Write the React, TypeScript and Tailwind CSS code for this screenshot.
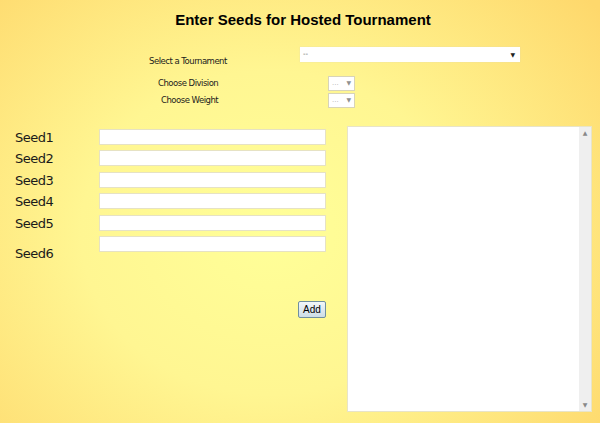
import { useState } from 'react'

const seeds = ['Seed1', 'Seed2', 'Seed3', 'Seed4', 'Seed5']

function SmallSelect() {
  return (
    <div className="flex h-[15px] w-[27px] items-center justify-between border border-[#d8d4b8] bg-white px-[3px]">
      <span className="text-[7px] leading-none text-[#b5b5b5]">...</span>
      <span className="text-[6px] leading-none text-[#909090]">▼</span>
    </div>
  )
}

export default function App() {
  const [values, setValues] = useState<string[]>(['', '', '', '', '', ''])

  const update = (i: number, v: string) => {
    const next = [...values]
    next[i] = v
    setValues(next)
  }

  return (
    <div className="relative h-[423px] w-[600px] overflow-hidden bg-[radial-gradient(ellipse_70%_85%_at_45%_55%,#ffff98_0%,#fff692_45%,#fed86c_100%)] font-['DejaVu_Sans',sans-serif] text-black">
      <h1 className="pt-[11px] pl-[6px] text-center text-[15px] font-bold leading-[18px] font-['Liberation_Sans',sans-serif]">
        Enter Seeds for Hosted Tournament
      </h1>

      <div className="mt-[18px] flex">
        <div className="ml-[149px] mt-[8px] w-[151px] text-[8.5px] tracking-[-0.5px] text-[#1c1c1c]">Select a Tournament</div>
        <div className="flex h-[15px] w-[220px] items-center justify-between bg-white pl-[3px] pr-[5px] shadow-[0_0_1px_#d8d4b8]">
          <span className="text-[7px] leading-none text-[#555]">--</span>
          <span className="text-[6px] leading-none text-[#222]">▼</span>
        </div>
      </div>

      <div className="mt-[8px] flex items-center">
        <div className="ml-[158px] w-[170px] text-[8.5px] tracking-[-0.5px] text-[#1c1c1c]">Choose Division</div>
        <SmallSelect />
      </div>
      <div className="mt-[2px] flex items-center">
        <div className="ml-[161px] w-[167px] text-[8.5px] tracking-[-0.5px] text-[#1c1c1c]">Choose Weight</div>
        <SmallSelect />
      </div>

      <div className="mt-[21px] flex">
        <div className="ml-[15px] flex w-[311px] flex-col">
          {seeds.map((s, i) => (
            <div key={s} className="flex h-[21.5px] items-start">
              <label className="w-[84px] text-[13px] leading-[18px] tracking-[-0.5px] text-[#1a1a1a]">{s}</label>
              <input
                value={values[i]}
                onChange={(e) => update(i, e.target.value)}
                className="h-[16px] w-[227px] border border-[#e6e2c4] bg-white outline-none"
              />
            </div>
          ))}
          <div className="flex items-start">
            <label className="mt-[9px] w-[84px] text-[13px] leading-[18px] tracking-[-0.5px] text-[#1a1a1a]">Seed6</label>
            <input
              value={values[5]}
              onChange={(e) => update(5, e.target.value)}
              className="h-[16px] w-[227px] border border-[#e6e2c4] bg-white outline-none"
            />
          </div>
          <div className="mt-[38px] flex justify-end">
            <button className="h-[17px] w-[28px] rounded-[2px] border border-[#6f8fa0] bg-gradient-to-b from-[#f2f7f9] to-[#cddde6] text-[10px] leading-none font-['Liberation_Sans',sans-serif] text-black">
              Add
            </button>
          </div>
        </div>

        <div className="ml-[21px] -mt-[3px] flex h-[286px] w-[245px] border border-[#e8e4c8] bg-white">
          <textarea className="h-full flex-1 resize-none outline-none" />
          <div className="flex w-[12px] flex-col justify-between bg-[#efefef] py-[3px] text-center text-[6px] leading-none text-[#888]">
            <span>▲</span>
            <span>▼</span>
          </div>
        </div>
      </div>
    </div>
  )
}
